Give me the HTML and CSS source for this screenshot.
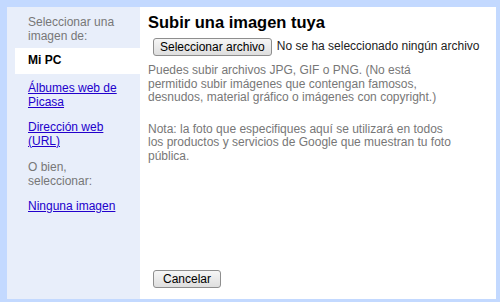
FILE: index.html
```html
<!DOCTYPE html>
<html lang="es">
<head>
    <meta charset="UTF-8">
    <meta name="viewport" content="width=device-width, initial-scale=1.0">
    <title>Subir una imagen tuya</title>
    <link rel="stylesheet" href="styles.css">
</head>
<body>
    <div class="picker">
        <div class="sidebar">
            <p class="side-label">Seleccionar una imagen de:</p>
            <div class="side-item selected">Mi PC</div>
            <a class="side-link first" href="#">Álbumes web de Picasa</a>
            <a class="side-link" href="#">Dirección web (URL)</a>
            <p class="side-label other">O bien, seleccionar:</p>
            <a class="side-link" href="#">Ninguna imagen</a>
        </div>

        <div class="main">
            <h1>Subir una imagen tuya</h1>
            <div class="file-row">
                <button class="btn">Seleccionar archivo</button>
                <span class="file-name">No se ha seleccionado ningún archivo</span>
            </div>
            <p class="note">Puedes subir archivos JPG, GIF o PNG. (No está permitido subir imágenes que contengan famosos, desnudos, material gráfico o imágenes con copyright.)</p>
            <p class="note">Nota: la foto que especifiques aquí se utilizará en todos los productos y servicios de Google que muestran tu foto pública.</p>
            <div class="actions">
                <button class="btn cancel">Cancelar</button>
            </div>
        </div>
    </div>
</body>
</html>
```

FILE: styles.css
```css
body {
    margin: 0;
    font-family: "Liberation Sans", Arial, sans-serif;
    font-size: 12px;
    line-height: 13.5px;
}

.picker {
    display: flex;
    height: 302px;
    box-sizing: border-box;
    background-color: #c3d9ff;
    border-style: solid;
    border-color: #c3d9ff;
    border-width: 7px 4px 3px 7px;
}

/* left column */
.sidebar {
    width: 133px;
    flex-shrink: 0;
    background-color: #e8eefa;
    padding-top: 9px;
    display: flex;
    flex-direction: column;
}

.side-label {
    margin: 0 0 5px 0;
    padding: 0 17px 0 21px;
    color: #777;
}

.side-label.other {
    margin: 13px 0 0 0;
}

.side-item.selected {
    margin-left: 8px;
    padding: 6px 0 6.5px 13px;
    background-color: #fff;
    color: #000;
    font-weight: bold;
}

.side-link {
    display: block;
    margin-top: 12px;
    padding: 0 17px 0 21px;
    color: #2200cc;
}

.side-link.first {
    margin-top: 8px;
}

/* right column */
.main {
    flex: 1;
    background-color: #fff;
    padding: 0 0 11px 8px;
    display: flex;
    flex-direction: column;
}

h1 {
    margin: 6px 0 0 0;
    font-size: 16.5px;
    line-height: 19px;
    color: #000;
}

.file-row {
    margin-top: 6px;
    display: flex;
    align-items: center;
    gap: 5px;
    color: #222;
}

.btn {
    margin-left: 5px;
    height: 18px;
    padding: 0 6px;
    font-family: "Liberation Sans", Arial, sans-serif;
    font-size: 12px;
    color: #000;
    background: linear-gradient(#f6f6f6, #dedede);
    border: 1px solid #8e8e8e;
    border-radius: 3px;
}

.btn.cancel {
    padding: 0 9px;
}

.note {
    width: 312px;
    margin: 8px 0 5px 0;
    color: #777;
}

.note + .note {
    margin-top: 13px;
}

.actions {
    margin-top: auto;
}
```
